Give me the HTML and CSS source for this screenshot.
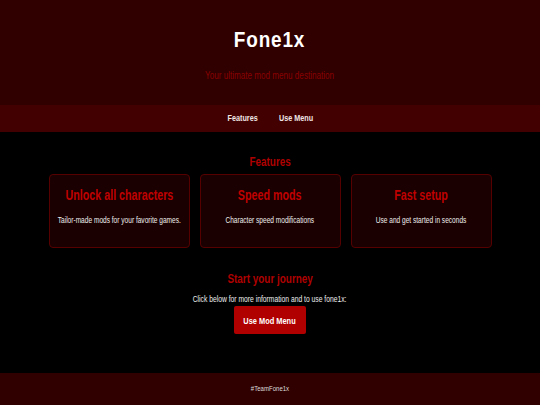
FILE: index.html
```html
<!DOCTYPE html>
<html lang="en">
<head>
<meta charset="utf-8">
<title>Fone1x</title>
<link rel="stylesheet" href="styles.css">
</head>
<body>
<header class="site-header">
  <h1 class="brand">Fone1x</h1>
  <p class="tagline">Your ultimate mod menu destination</p>
</header>
<nav class="site-nav">
  <div class="nav-inner">
    <a class="nav-link" href="#features">Features</a>
    <a class="nav-link" href="#menu">Use Menu</a>
  </div>
</nav>
<main class="content">
  <section class="features" id="features">
    <h2 class="section-title">Features</h2>
    <div class="card-row">
      <div class="card">
        <h3 class="card-title">Unlock all characters</h3>
        <p class="card-text">Tailor-made mods for your favorite games.</p>
      </div>
      <div class="card">
        <h3 class="card-title">Speed mods</h3>
        <p class="card-text">Character speed modifications</p>
      </div>
      <div class="card">
        <h3 class="card-title">Fast setup</h3>
        <p class="card-text">Use and get started in seconds</p>
      </div>
    </div>
  </section>
  <section class="journey" id="menu">
    <h2 class="section-title">Start your journey</h2>
    <p class="journey-text">Click below for more information and to use fone1x:</p>
    <a class="cta" href="#menu"><span class="cta-label">Use Mod Menu</span></a>
  </section>
</main>
<footer class="site-footer">
  <p class="footer-text">#TeamFone1x</p>
</footer>
</body>
</html>
```

FILE: styles.css
```css
* {
  box-sizing: border-box;
}

html, body {
  margin: 0;
  padding: 0;
  background: #000;
}

body {
  font-family: "Liberation Sans", Arial, sans-serif;
  color: #fff;
  text-align: center;
}

/* the design uses a condensed face; squeeze the text horizontally */
.brand,
.tagline,
.nav-inner,
.section-title,
.card-title,
.card-text,
.journey-text,
.cta-label,
.footer-text {
  white-space: nowrap;
  transform-origin: 50% 50%;
}

.site-header {
  background: #300000;
  height: 105px;
  padding-top: 27px;
  display: flex;
  flex-direction: column;
  align-items: center;
}

.brand {
  margin: 0;
  font-size: 22px;
  line-height: 26px;
  font-weight: 700;
  letter-spacing: 1px;
  color: #fff;
  transform: scaleX(0.86);
}

.tagline {
  margin: 17px 0 0;
  font-size: 10px;
  line-height: 12px;
  color: #8a0000;
  transform: scaleX(0.81);
}

.site-nav {
  background: #420000;
  height: 27px;
  display: flex;
  justify-content: center;
  align-items: center;
}

.nav-inner {
  display: flex;
  gap: 25px;
  transform: scaleX(0.85);
}

.nav-link {
  color: #f0e6e6;
  text-decoration: none;
  font-weight: 700;
  font-size: 8.5px;
  line-height: 11px;
}

.content {
  display: flex;
  flex-direction: column;
  align-items: center;
  padding: 22px 0 39px;
}

.features {
  display: flex;
  flex-direction: column;
  align-items: center;
}

.section-title {
  margin: 0;
  font-size: 13.5px;
  line-height: 16px;
  font-weight: 700;
  color: #b00000;
  transform: scaleX(0.735);
}

.card-row {
  display: flex;
  gap: 10px;
  width: 443px;
  margin-top: 4px;
}

.card {
  flex: 1 1 0;
  min-width: 0;
  display: flex;
  flex-direction: column;
  align-items: center;
  background: #1a0000;
  border: 1px solid #560000;
  border-radius: 4px;
  padding: 12px 0 0;
  height: 74px;
}

.card-title {
  margin: 0;
  font-size: 14px;
  line-height: 17px;
  font-weight: 700;
  color: #c00000;
  transform: scaleX(0.765);
}

.card-text {
  margin: 11px 0 0;
  font-size: 9px;
  line-height: 10px;
  color: #eee;
  transform: scaleX(0.73);
}

.journey {
  display: flex;
  flex-direction: column;
  align-items: center;
  margin-top: 23px;
}

.journey-text {
  margin: 7px 0 0;
  font-size: 9px;
  line-height: 10px;
  color: #eee;
  transform: scaleX(0.75);
}

.cta {
  margin-top: 2px;
  width: 72px;
  height: 28px;
  display: flex;
  align-items: center;
  justify-content: center;
  background: #b00000;
  border-radius: 2px;
  color: #fff;
  text-decoration: none;
}

.cta-label {
  display: block;
  font-weight: 700;
  font-size: 9.5px;
  line-height: 11px;
  transform: scaleX(0.78);
}

.site-footer {
  background: #300000;
  padding: 11px 0 12px;
}

.footer-text {
  margin: 0;
  font-size: 8px;
  line-height: 10px;
  color: #ddd;
  transform: scaleX(0.755);
}
```
